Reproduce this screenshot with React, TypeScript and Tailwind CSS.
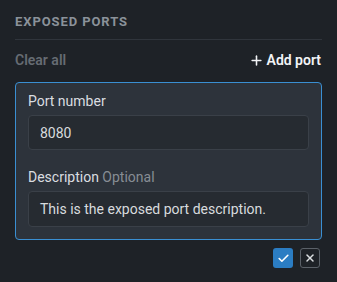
import { Check, X, Plus } from 'lucide-react'

export default function App() {
  return (
    <div
      className="min-h-screen w-[337px] bg-[#1e2227] px-[15px] pt-[14px] text-sm"
      style={{ fontFamily: 'Roboto, "Noto Sans", sans-serif' }}
    >
      {/* Header */}
      <h2 className="text-[13px] leading-4 font-bold tracking-[0.07em] text-[#8b929a]">EXPOSED PORTS</h2>
      <div className="mt-[9px] h-px bg-[#30353c]" />

      <div className="mt-[10px] flex items-center justify-between leading-5">
        <button className="text-[14px] font-semibold text-[#666c73]">Clear all</button>
        <button className="flex items-center gap-[3px] pr-px text-[14px] font-semibold text-[#f2f4f6]">
          <Plus size={15} strokeWidth={2.5} />
          Add port
        </button>
      </div>

      {/* Port form */}
      <div className="mt-3 rounded-[4px] border border-[#3a8fd2] bg-[#2d333b] px-3 pt-2 pb-3">
        <label className="block text-[14px] leading-5 text-[#dadde0]">Port number</label>
        <div className="mt-1 flex h-[35px] items-center rounded-[4px] border border-[#3a4048] bg-[#262b31] px-[11px] text-[14px] text-[#d8dbde]">
          8080
        </div>

        <label className="mt-[17px] block text-[14px] leading-5 text-[#dadde0]">
          Description <span className="text-[#878d94]">Optional</span>
        </label>
        <div className="mt-1 flex h-[36px] items-center rounded-[4px] border border-[#3a4048] bg-[#262b31] px-[11px] text-[14px] text-[#d8dbde]">
          This is the exposed port description.
        </div>
      </div>

      <div className="mt-2 flex justify-end gap-[7px] pr-[2px]">
        <button className="flex h-5 w-5 items-center justify-center rounded-[3px] bg-[#2b7dc3] text-white">
          <Check size={13} strokeWidth={3} />
        </button>
        <button className="flex h-5 w-5 items-center justify-center rounded-[3px] border border-[#5b6168] text-[#dcdfe2]">
          <X size={12} strokeWidth={3} />
        </button>
      </div>
    </div>
  )
}
